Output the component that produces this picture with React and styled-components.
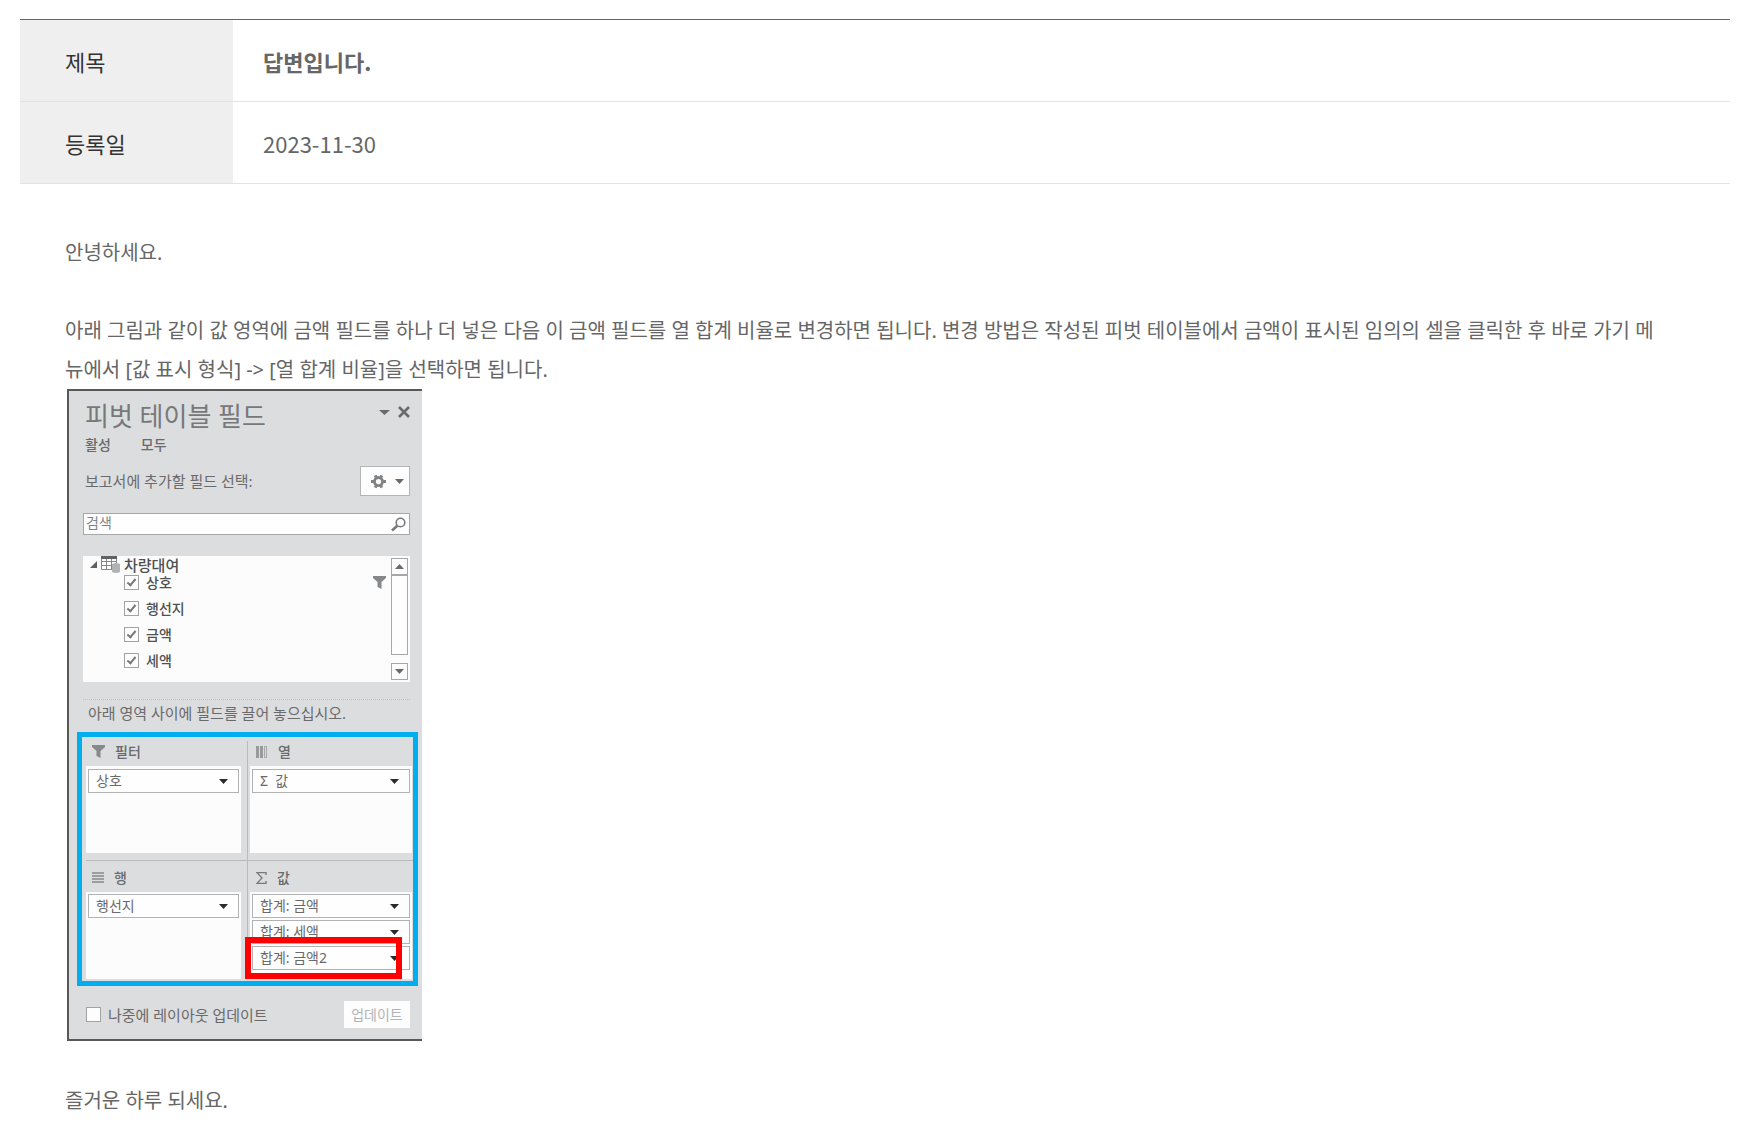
import React from "react";
import styled, { createGlobalStyle } from "styled-components";

const Global = createGlobalStyle`
  *, *::before, *::after { box-sizing: border-box; }
  body {
    margin: 0;
    background: #fff;
    color: #666;
    font-family: "Noto Sans CJK KR", "Noto Sans", sans-serif;
  }
  button, input, select { font: inherit; color: inherit; margin: 0; }
`;

const Page = styled.main`
  padding: 19px 14px 19px 20px;
`;

const InfoTable = styled.table`
  width: 100%;
  border-collapse: separate;
  border-spacing: 0;
  border-top: 1px solid #666;
  font-size: 22px;
  line-height: 33px;
`;

const InfoRow = styled.tr`
  height: 82px;
`;

const Label = styled.th`
  width: 213px;
  padding: 1px 45px 0;
  border-bottom: 1px solid #e3e3e3;
  background: #efefef;
  color: #333;
  font-weight: 400;
  text-align: left;
`;

const Value = styled.td`
  padding: 1px 30px 0;
  border-bottom: 1px solid #e3e3e3;
  font-weight: ${(p) => (p.$strong ? 700 : 400)};
`;

const Article = styled.article`
  padding: 49px 64px 0 45px;
  font-family: "Noto Sans", "Noto Sans CJK KR", sans-serif;
  font-size: 20px;
  line-height: 39px;
`;

const Paragraph = styled.p`
  margin: 0 0 ${(p) => (p.$tight ? 0 : 39)}px;
  word-break: break-all;
`;

const Panel = styled.section`
  width: 355px;
  margin: 0 0 40px 2px;
  padding: 10px 12px 11px 14px;
  border: solid #58585a;
  border-width: 2px 0 2px 2px;
  background: #dcddde;
  color: #6a6a6c;
  font-size: 14px;
  line-height: 20px;
`;

const Row = styled.div`
  display: flex;
  align-items: center;
  justify-content: space-between;
`;

const TitleRow = styled(Row)`
  align-items: flex-start;
  height: 34px;
  padding-left: 2px;
`;

const PanelTitle = styled.h2`
  margin: 0;
  color: #77787a;
  font-size: 26px;
  font-weight: 400;
  line-height: 30px;
`;

const IconGroup = styled.div`
  display: flex;
  align-items: center;
  gap: 8px;
  padding-top: 5px;
`;

const IconButton = styled.button`
  display: flex;
  padding: 0;
  border: 0;
  background: none;
`;

const Tabs = styled.div`
  display: flex;
  gap: 30px;
  padding-left: 2px;
  margin-bottom: 11px;
`;

const Tab = styled.button`
  padding: 0;
  border: 0;
  background: none;
  font-weight: 500;
`;

const ToolRow = styled(Row)`
  padding-left: 2px;
  font-size: 15px;
`;

const GearButton = styled.button`
  display: flex;
  align-items: center;
  justify-content: space-between;
  width: 50px;
  height: 30px;
  padding: 0 5px 0 10px;
  border: 1px solid #b4b5b7;
  background: #fdfdfd;
`;

const Search = styled.label`
  display: flex;
  align-items: center;
  height: 22px;
  margin: 17px 0 21px;
  padding: 0 3px 0 2px;
  border: 1px solid #a6a7a9;
  background: #fefefe;
`;

const SearchInput = styled.input`
  flex: 1;
  min-width: 0;
  height: 20px;
  padding: 0 0 3px;
  border: 0;
  outline: 0;
  background: none;
  &::placeholder { color: #828385; opacity: 1; }
`;

const FieldList = styled.div`
  display: flex;
  height: 126px;
  padding: 2px 2px 2px 7px;
  background: #fcfcfc;
`;

const Tree = styled.div`
  flex: 1;
  color: #505052;
  font-weight: 500;
`;

const TreeHead = styled.div`
  display: flex;
  align-items: center;
  gap: 4px;
  height: 13px;
  font-size: 15px;
`;

const FieldRow = styled(Row)`
  height: 26px;
  padding: 0 5px 3px 34px;
`;

const CheckLabel = styled.label`
  display: flex;
  align-items: center;
  gap: ${(p) => p.$gap}px;
`;

const Check = styled.input`
  appearance: none;
  display: grid;
  width: 15px;
  height: 15px;
  border: 1px solid #a1a2a4;
  background: #fdfdfd;
  &:checked::before {
    content: "";
    width: 5px;
    height: 9px;
    margin: 1px 0 0 4px;
    border: solid #77787a;
    border-width: 0 2px 2px 0;
    transform: rotate(40deg);
  }
`;

const ScrollBar = styled.div`
  display: flex;
  flex-direction: column;
  width: 17px;
`;

const ScrollButton = styled.button`
  display: grid;
  place-items: center;
  height: 17px;
  padding: 0;
  border: 1px solid #a6a7a9;
  background: #fdfdfd;
`;

const Thumb = styled.div`
  height: 80px;
  margin-bottom: 8px;
  border: 1px solid #a6a7a9;
  background: #fdfdfd;
`;

const Hint = styled.p`
  margin: 17px 0 9px;
  padding: 3px 5px 0;
  border-top: 1px dotted #c0c1c3;
  font-size: 15px;
`;

const Areas = styled.div`
  position: relative;
  display: grid;
  grid-template-columns: 162px 1fr;
  margin: 0 -8px 0 -6px;
  padding: 4px 0 2px 4px;
  border: 5px solid #00aeef;
`;

const Area = styled.div`
  padding-right: ${(p) => (p.$left ? 6 : 1)}px;
  padding-left: ${(p) => (p.$left ? 0 : 2)}px;
  padding-bottom: ${(p) => (p.$top ? 7 : 0)}px;
  border: solid #b9babc;
  border-width: 0 ${(p) => (p.$left ? 1 : 0)}px ${(p) => (p.$top ? 1 : 0)}px 0;
`;

const AreaTitle = styled.h3`
  display: flex;
  align-items: center;
  gap: 10px;
  height: ${(p) => (p.$top ? 25 : 31)}px;
  margin: 0;
  padding: ${(p) => (p.$top ? "0 6px 4px" : "2px 6px 0")};
  font-size: 14px;
  font-weight: 500;
`;

const Drop = styled.div`
  height: 87px;
  padding: ${(p) => (p.$top ? 3 : 2)}px 2px 0;
  background: #fcfcfc;
`;

const SelectBox = styled.div`
  display: grid;
  align-items: center;
  height: 24px;
  margin-bottom: 2px;
  border: 1px solid #b1b2b4;
  > * { grid-area: 1 / 1; }
  > svg { justify-self: end; margin-right: 10px; pointer-events: none; }
`;

const Select = styled.select`
  appearance: none;
  width: 100%;
  height: 22px;
  padding: 0 24px 0 7px;
  border: 0;
  border-radius: 0;
  background: #fefefe;
`;

const Highlight = styled.div`
  position: absolute;
  right: 11px;
  bottom: 2px;
  width: 157px;
  height: 42px;
  border: 6px solid #fe0000;
  pointer-events: none;
`;

const Footer = styled(Row)`
  margin-top: 15px;
  padding-left: 3px;
  font-size: 15px;
`;

const UpdateButton = styled.button`
  width: 66px;
  height: 27px;
  padding: 0;
  border: 0;
  background: #fdfdfd;
  color: #b3b4b6;
  font-size: 14px;
`;

const Arrow = ({ color = "#6a6a6c", up = false, w = 9 }) => (
  <svg width={w} height="5" viewBox="0 0 9 5" preserveAspectRatio="none" aria-hidden="true">
    <path d={up ? "M0 5 4.500 0 9 5Z" : "M0 0H9L4.500 5Z"} fill={color} />
  </svg>
);

const Funnel = () => (
  <svg width="13" height="13" viewBox="0 0 13 13" aria-hidden="true">
    <path d="M0 0H13V2L8.500 6V13L4.500 11V6L0 2Z" fill="#87888a" />
  </svg>
);

const Cross = () => (
  <svg width="12" height="12" viewBox="0 0 12 12" aria-hidden="true">
    <path d="M1 1 11 11M11 1 1 11" stroke="#6a6a6c" strokeWidth="2.600" />
  </svg>
);

const Gear = () => (
  <svg width="15" height="15" viewBox="0 0 16 16" aria-hidden="true">
    <circle cx="8" cy="8" r="4.300" fill="none" stroke="#808183" strokeWidth="3" />
    <path
      d="M13 8H16M0 8H3M10.500 12.300 11.500 14.500M4.500 1.500 5.500 3.700M5.500 12.300 4.500 14.500M11.500 1.500 10.500 3.700"
      stroke="#808183"
      strokeWidth="3.200"
    />
  </svg>
);

const Lens = () => (
  <svg width="15" height="15" viewBox="0 0 15 15" aria-hidden="true">
    <circle cx="9.500" cy="5.500" r="4.300" fill="none" stroke="#77787a" strokeWidth="1.600" />
    <path d="M6.300 8.700 1 13.500" stroke="#77787a" strokeWidth="2.600" />
  </svg>
);

const Expander = () => (
  <svg width="7" height="7" viewBox="0 0 8 8" aria-hidden="true">
    <path d="M8 0V8H0Z" fill="#606163" />
  </svg>
);

const TableIcon = () => (
  <svg width="19" height="17" viewBox="0 0 19 17" aria-hidden="true">
    <path d="M.5 1V13.500H11M.5 5.500H15M.5 9.500H11M5.500 2V13.500M10.500 2V13.500M15.500 2V7" fill="none" stroke="#87888a" />
    <path d="M0 0H16V3H0Z" fill="#606163" />
    <path d="M11 8Q15 6 19 8V16Q15 18 11 16Z" fill="#b1b2b4" />
  </svg>
);

const ColumnsIcon = () => (
  <svg width="12" height="12" viewBox="0 0 12 12" aria-hidden="true">
    <path d="M0 0H3V12H0ZM4 0H7V12H4Z" fill="#98999b" />
    <path d="M8.500 .5H10.500V11.500H8.500Z" fill="none" stroke="#a6a7a9" />
  </svg>
);

const RowsIcon = () => (
  <svg width="12" height="11" viewBox="0 0 12 11" aria-hidden="true">
    <path d="M0 1H12M0 4H12M0 7H12M0 10H12" stroke="#87888a" strokeWidth="1.500" />
  </svg>
);

const Sigma = () => (
  <svg width="11" height="12" viewBox="0 0 11 12" aria-hidden="true">
    <path d="M10 3V.7H1L6 6 1 11.300H10V9" fill="none" stroke="#77787a" strokeWidth="1.300" />
  </svg>
);

const fields = ["상호", "행선지", "금액", "세액"];

const areas = [
  { title: "필터", icon: <Funnel />, items: ["상호"], top: true, left: true },
  { title: "열", icon: <ColumnsIcon />, items: ["Σ\u00a0\u00a0값"], top: true },
  { title: "행", icon: <RowsIcon />, items: ["행선지"], left: true },
  { title: "값", icon: <Sigma />, items: ["합계: 금액", "합계: 세액", "합계: 금액2"] },
];

function PivotPanel() {
  return (
    <Panel aria-label="피벗 테이블 필드">
      <TitleRow>
        <PanelTitle>피벗 테이블 필드</PanelTitle>
        <IconGroup>
          <IconButton type="button" aria-label="메뉴"><Arrow w={11} /></IconButton>
          <IconButton type="button" aria-label="닫기"><Cross /></IconButton>
        </IconGroup>
      </TitleRow>
      <Tabs>
        <Tab type="button">활성</Tab>
        <Tab type="button">모두</Tab>
      </Tabs>
      <ToolRow>
        <span>보고서에 추가할 필드 선택:</span>
        <GearButton type="button" aria-label="도구"><Gear /><Arrow /></GearButton>
      </ToolRow>
      <Search>
        <SearchInput type="text" placeholder="검색" aria-label="검색" />
        <Lens />
      </Search>
      <FieldList>
        <Tree>
          <TreeHead><Expander /><TableIcon /><span>차량대여</span></TreeHead>
          {fields.map((name, i) => (
            <FieldRow key={name}>
              <CheckLabel $gap={7}>
                <Check type="checkbox" defaultChecked />
                {name}
              </CheckLabel>
              {i === 0 && <Funnel />}
            </FieldRow>
          ))}
        </Tree>
        <ScrollBar>
          <ScrollButton type="button" aria-label="위로"><Arrow up /></ScrollButton>
          <Thumb />
          <ScrollButton type="button" aria-label="아래로"><Arrow /></ScrollButton>
        </ScrollBar>
      </FieldList>
      <Hint>아래 영역 사이에 필드를 끌어 놓으십시오.</Hint>
      <Areas>
        {areas.map((area) => (
          <Area key={area.title} $top={area.top} $left={area.left}>
            <AreaTitle $top={area.top}>{area.icon}{area.title}</AreaTitle>
            <Drop $top={area.top}>
              {area.items.map((item) => (
                <SelectBox key={item}>
                  <Select aria-label={area.title} defaultValue={item}>
                    <option value={item}>{item}</option>
                  </Select>
                  <Arrow color="#2b2b2d" />
                </SelectBox>
              ))}
            </Drop>
          </Area>
        ))}
        <Highlight />
      </Areas>
      <Footer>
        <CheckLabel $gap={7}>
          <Check type="checkbox" />
          나중에 레이아웃 업데이트
        </CheckLabel>
        <UpdateButton type="button">업데이트</UpdateButton>
      </Footer>
    </Panel>
  );
}

export default function App() {
  return (
    <>
      <Global />
      <Page>
        <InfoTable>
          <tbody>
            <InfoRow>
              <Label scope="row">제목</Label>
              <Value $strong>답변입니다.</Value>
            </InfoRow>
            <InfoRow>
              <Label scope="row">등록일</Label>
              <Value>2023-11-30</Value>
            </InfoRow>
          </tbody>
        </InfoTable>
        <Article>
          <Paragraph>안녕하세요.</Paragraph>
          <Paragraph $tight>
            아래 그림과 같이 값 영역에 금액 필드를 하나 더 넣은 다음 이 금액 필드를 열 합계 비율로 변경하면 됩니다. 변경 방법은 작성된 피벗 테이블에서 금액이 표시된 임의의 셀을 클릭한 후 바로 가기 메뉴에서 [값 표시 형식] -&gt; [열 합계 비율]을 선택하면 됩니다.
          </Paragraph>
          <PivotPanel />
          <Paragraph $tight>즐거운 하루 되세요.</Paragraph>
        </Article>
      </Page>
    </>
  );
}
